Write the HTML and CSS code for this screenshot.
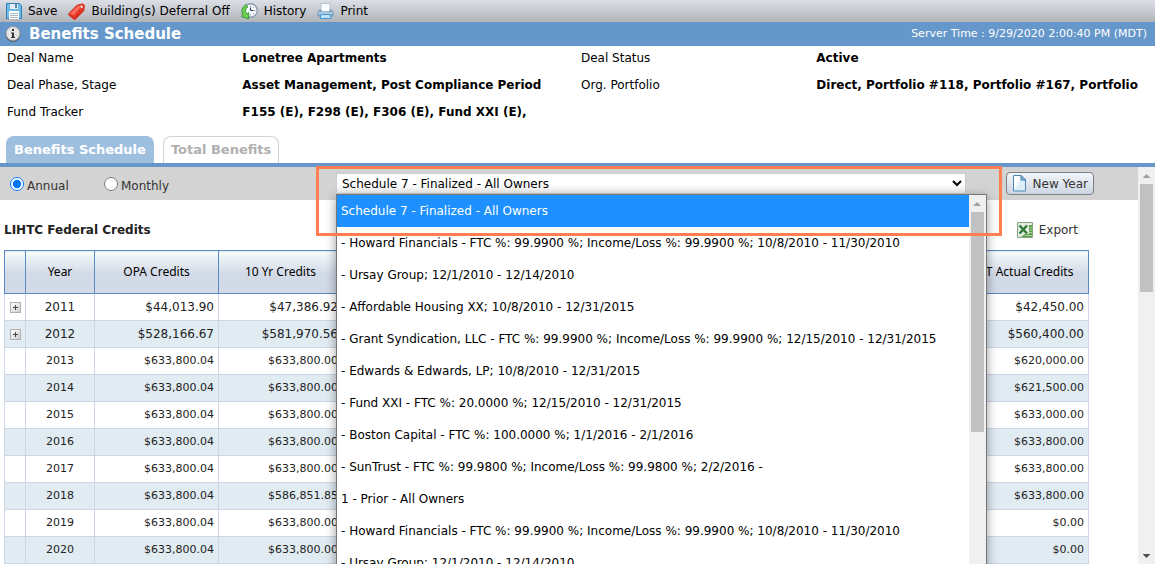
FILE: index.html
```html
<!DOCTYPE html>
<html lang="en">
<head>
<meta charset="utf-8">
<title>Benefits Schedule</title>
<link rel="stylesheet" href="styles.css">
</head>
<body>
<header>
  <nav class="toolbar" aria-label="Actions">
    <button type="button" class="tool">
      <svg width="16" height="16" viewBox="0 0 16 16" aria-hidden="true"><path d="M.5.5h13l2 2v13H.5z" fill="#6dbbe4" stroke="#2f80b3"/><path d="M4 1h8v5H4z" fill="#e6edf2"/><path d="M9 1h2v4H9z" fill="#5d87a8"/><path d="M3 8h10v8H3z" fill="#fff"/><path d="M4 10.500h8M4 12.500h8M4 14.500h8" stroke="#a8bac6"/></svg>
      Save</button>
    <button type="button" class="tool">
      <svg width="17" height="17" viewBox="0 0 17 17" aria-hidden="true"><path d="M.8 10.500 9 2.200 15 .8l1.500 1.500-.7 5.500-8.300 8.400q-1 .6-2-.3L.8 12q-.6-.8 0-1.500z" fill="#e83a26" stroke="#cf2a1a" stroke-width=".8"/><path d="M2 10.500 9.500 3.200l4.500-1-8 9.800z" fill="#fb6f5c"/><path d="m3 12.500 3.500 3 8-8" fill="none" stroke="#c71e10"/><circle cx="13.600" cy="3.800" r="1.400" fill="#fff" stroke="#b53a2e" stroke-width=".5"/></svg>
      Building(s) Deferral Off</button>
    <button type="button" class="tool">
      <svg width="17" height="17" viewBox="0 0 17 17" aria-hidden="true"><circle cx="9.500" cy="7.500" r="6.700" fill="#f8fbfd" stroke="#8d9cac" stroke-width="1.400"/><path d="M9.500 2.500V4M14.500 7.500H13M9.500 12.500V11M6 4l1 1M13 4l-1 1M13 11l-1-1" stroke="#7e8c9b" stroke-width=".8"/><path d="M9.500 4.500v3h3" stroke="#2b3b4c" fill="none"/><path d="M5 1.500Q-1 6 1.800 11.500L.5 13.500l7 2.500.3-6.500L6 11Q3 7.500 6.500 3.500z" fill="#6fd04f" stroke="#2b9430" stroke-width=".9"/></svg>
      History</button>
    <button type="button" class="tool">
      <svg width="17" height="16" viewBox="0 0 17 16" aria-hidden="true"><path d="M4 .5h9V9H4z" fill="#fafdff" stroke="#b3c5d4"/><path d="M2.500 7h1.500v2h9V7h1.500L16 9.500V13H1V9.500z" fill="#96b4cf" stroke="#6c94ba"/><path d="M1.500 10h14" stroke="#cfe3f3"/><path d="M4 11.500h9l1 4H3z" fill="#bfe4fb" stroke="#3f97d3"/></svg>
      Print</button>
  </nav>
  <div class="titlebar">
    <svg width="16" height="16" viewBox="0 0 16 16" aria-hidden="true"><circle cx="8" cy="8.400" r="7.500" fill="#4d5f70"/><circle cx="8" cy="7.500" r="7" fill="#e4e4e4" stroke="#9a9a9a" stroke-width=".8"/><path d="M7 3h2v2H7zM6 6.500h3V11h1v1H6v-1h1V7.500H6z" fill="#333"/></svg>
    <h1>Benefits Schedule</h1>
    <span class="server-time">Server Time : 9/29/2020 2:00:40 PM (MDT)</span>
  </div>
</header>
<dl class="details">
  <dt>Deal Name</dt><dd>Lonetree Apartments</dd>
  <dt>Deal Status</dt><dd>Active</dd>
  <dt>Deal Phase, Stage</dt><dd>Asset Management, Post Compliance Period</dd>
  <dt>Org. Portfolio</dt><dd>Direct, Portfolio #118, Portfolio #167, Portfolio</dd>
  <dt>Fund Tracker</dt><dd>F155 (E), F298 (E), F306 (E), Fund XXI (E),</dd>
</dl>
<div class="tabs" role="tablist">
  <button type="button" class="tab tab-active" role="tab" aria-selected="true">Benefits Schedule</button>
  <button type="button" class="tab" role="tab" aria-selected="false">Total Benefits</button>
</div>
<main class="workspace">
  <div class="content">
    <form class="filters">
      <label class="period"><input type="radio" name="period" checked>Annual</label>
      <label class="period"><input type="radio" name="period">Monthly</label>
      <div class="picker">
        <select class="schedule" aria-label="Schedule"><option>Schedule 7 - Finalized - All Owners</option></select>
        <div class="menu">
          <ul class="options" role="listbox" aria-label="Schedules">
            <li role="option" aria-selected="true" class="selected">Schedule 7 - Finalized - All Owners</li>
            <li role="option">- Howard Financials - FTC %: 99.9900 %; Income/Loss %: 99.9900 %; 10/8/2010 - 11/30/2010</li>
            <li role="option">- Ursay Group; 12/1/2010 - 12/14/2010</li>
            <li role="option">- Affordable Housing XX; 10/8/2010 - 12/31/2015</li>
            <li role="option">- Grant Syndication, LLC - FTC %: 99.9900 %; Income/Loss %: 99.9900 %; 12/15/2010 - 12/31/2015</li>
            <li role="option">- Edwards &amp; Edwards, LP; 10/8/2010 - 12/31/2015</li>
            <li role="option">- Fund XXI - FTC %: 20.0000 %; 12/15/2010 - 12/31/2015</li>
            <li role="option">- Boston Capital - FTC %: 100.0000 %; 1/1/2016 - 2/1/2016</li>
            <li role="option">- SunTrust - FTC %: 99.9800 %; Income/Loss %: 99.9800 %; 2/2/2016 -</li>
            <li role="option">1 - Prior - All Owners</li>
            <li role="option">- Howard Financials - FTC %: 99.9900 %; Income/Loss %: 99.9900 %; 10/8/2010 - 11/30/2010</li>
            <li role="option">- Ursay Group; 12/1/2010 - 12/14/2010</li>
          </ul>
          <div class="scrollbar" aria-hidden="true"><span class="arrow-up"></span><span class="thumb thumb-menu"></span></div>
        </div>
        <div class="callout"></div>
      </div>
      <button type="button" class="new-year">
        <svg width="15" height="17" viewBox="0 0 15 17" aria-hidden="true"><path d="M1.500.5H9L13.500 5v11h-12z" fill="#dceef8" stroke="#4e87b0"/><path d="M2 1h6v4l-6 10z" fill="#fff"/><path d="M9 .5V5h4.500z" fill="#8ec0df" stroke="#3f7fae"/></svg>
        New Year</button>
    </form>
    <div class="section-head">
      <h2>LIHTC Federal Credits</h2>
      <button type="button" class="export">
        <svg width="16" height="16" viewBox="0 0 16 16" aria-hidden="true"><path d="M.5.5h15v15H.5z" fill="#e3ecdf" stroke="#88a583"/><path d="M12 3h3v12H4l4-3h4z" fill="#5fa04f"/><path d="M12.500 5.500H15M12.500 8H15M12 10.500h3M8 13.500h7" stroke="#a9cf9c"/><path d="m2.500 3.500 7.500 8M10 3.500l-7.500 8" stroke="#2c7a37" stroke-width="2.400"/></svg>
        Export</button>
    </div>
    <table class="credits">
      <colgroup><col class="col-toggle"><col class="col-year"><col class="col-money"><col class="col-money"><col><col class="col-money"></colgroup>
      <thead><tr><th></th><th>Year</th><th>OPA Credits</th><th>10 Yr Credits</th><th></th><th>FT Actual Credits</th></tr></thead>
      <tbody>
        <tr class="expandable"><td><button type="button" class="expand" aria-label="Expand 2011"></button></td><td>2011</td><td>$44,013.90</td><td>$47,386.92</td><td></td><td>$42,450.00</td></tr>
        <tr class="expandable"><td><button type="button" class="expand" aria-label="Expand 2012"></button></td><td>2012</td><td>$528,166.67</td><td>$581,970.56</td><td></td><td>$560,400.00</td></tr>
        <tr><td></td><td>2013</td><td>$633,800.04</td><td>$633,800.00</td><td></td><td>$620,000.00</td></tr>
        <tr><td></td><td>2014</td><td>$633,800.04</td><td>$633,800.00</td><td></td><td>$621,500.00</td></tr>
        <tr><td></td><td>2015</td><td>$633,800.04</td><td>$633,800.00</td><td></td><td>$633,000.00</td></tr>
        <tr><td></td><td>2016</td><td>$633,800.04</td><td>$633,800.00</td><td></td><td>$633,800.00</td></tr>
        <tr><td></td><td>2017</td><td>$633,800.04</td><td>$633,800.00</td><td></td><td>$633,800.00</td></tr>
        <tr><td></td><td>2018</td><td>$633,800.04</td><td>$586,851.85</td><td></td><td>$633,800.00</td></tr>
        <tr><td></td><td>2019</td><td>$633,800.04</td><td>$633,800.00</td><td></td><td>$0.00</td></tr>
        <tr><td></td><td>2020</td><td>$633,800.04</td><td>$633,800.00</td><td></td><td>$0.00</td></tr>
      </tbody>
    </table>
  </div>
  <div class="scrollbar" aria-hidden="true"><span class="arrow-up"></span><span class="thumb thumb-page"></span><span class="arrow-down"></span></div>
</main>
</body>
</html>
```
FILE: styles.css
```css
* { box-sizing: border-box; }
body {
  margin: 0;
  height: 100vh;
  overflow: hidden;
  display: flex;
  flex-direction: column;
  background: #fff;
  color: #000;
  font: 12px/16px "DejaVu Sans", Verdana, sans-serif;
}
button { font: inherit; color: inherit; background: none; border: 0; padding: 0; }
h1, h2, dl, dd, ul { margin: 0; padding: 0; }
svg { flex: none; display: block; }

.toolbar {
  display: flex;
  align-items: center;
  gap: 11px;
  height: 22px;
  padding: 0 6px;
  background: linear-gradient(#dcdfe6, #b0b3b8);
}
.tool { display: flex; align-items: center; gap: 6px; white-space: nowrap; }
.titlebar {
  display: flex;
  align-items: center;
  gap: 8px;
  height: 24px;
  padding: 0 8px 0 5px;
  background: #6597ca;
  color: #fff;
}
.titlebar h1 { font-size: 15px; line-height: 24px; }
.server-time { margin-left: auto; font-size: 11px; }

.details {
  display: grid;
  grid-template-columns: 41fr 59fr 41fr 59fr;
  grid-auto-rows: 27px;
  align-items: center;
  padding: 0 0 11px 7px;
  margin-top: -2px;
  white-space: nowrap;
}
.details dd { font-weight: bold; }

.tabs {
  display: flex;
  gap: 9px;
  padding: 0 6px;
  border-bottom: 4px solid #6597ca;
}
.tab {
  height: 27px;
  padding: 0 7px;
  border: 1px solid #d3d3d3;
  border-bottom: 0;
  border-radius: 8px 8px 0 0;
  color: #b0b0b0;
  font-size: 13px;
  font-weight: bold;
}
.tab-active { background: #9fbfdf; border-color: #9fbfdf; color: #fff; }

.workspace { flex: 1; min-height: 0; display: flex; }
.content { flex: 1; min-width: 0; }
.filters {
  display: flex;
  align-items: center;
  height: 33px;
  padding: 0 44px 0 10px;
  background: #d3d3d3;
}
.period { display: flex; align-items: center; gap: 3px; width: 94px; padding-top: 4px; color: #333; }
.period input { margin: 0 0 4px; width: 14px; height: 14px; }
.picker { position: relative; flex: 1; margin: 0 40px 0 138px; }
.schedule {
  display: block;
  width: 100%;
  height: 21px;
  padding: 0 1px;
  border: 1px solid #ccc;
  background: linear-gradient(#fff 50%, #eee);
  color: #000;
  font: inherit;
}
.menu {
  position: absolute;
  z-index: 1;
  top: 100%;
  left: 0;
  right: -21px;
  display: flex;
  border: 1px solid #777;
  background: #fff;
  box-shadow: 0 3px 10px rgba(0, 0, 0, .4);
}
.options { flex: 1; min-width: 0; list-style: none; white-space: nowrap; }
.options li { height: 32px; padding-left: 4px; line-height: 32px; }
.options .selected { background: #1e90ff; color: #fff; }
.callout {
  position: absolute;
  z-index: 2;
  top: -7px;
  left: -20px;
  right: -36px;
  height: 70px;
  border: 3px solid #ff7f50;
  pointer-events: none;
}
.scrollbar {
  display: flex;
  flex-direction: column;
  align-items: center;
  width: 17px;
  background: #f0f0f0;
}
.arrow-up, .arrow-down { width: 8px; height: 4px; margin: 7px 0 6px; }
.arrow-up { background: #a0a0a0; clip-path: polygon(50% 0, 100% 100%, 0 100%); }
.arrow-down { margin-top: auto; background: #505050; clip-path: polygon(0 0, 100% 0, 50% 100%); }
.thumb { width: 13px; background: #c1c1c1; }
.thumb-menu { height: 220px; }
.thumb-page { height: 108px; }

.new-year {
  display: flex;
  align-items: center;
  gap: 6px;
  height: 23px;
  padding: 0 5px;
  border: 1px solid #7b7f86;
  border-radius: 4px;
  background: linear-gradient(#f2f6f9, #cdd5e4);
  color: #333;
  white-space: nowrap;
}
.section-head {
  display: flex;
  align-items: center;
  justify-content: space-between;
  height: 50px;
  padding: 10px 60px 0 4px;
}
.section-head h2 { font-size: 12px; color: #222; }
.export { display: flex; align-items: center; gap: 6px; color: #333; }

.credits {
  width: calc(100% - 53px);
  margin-left: 4px;
  table-layout: fixed;
  border-collapse: collapse;
}
.col-toggle { width: 21px; }
.col-year { width: 69px; }
.col-money { width: 124px; }
.credits th {
  height: 43px;
  padding: 0;
  border: 1px solid #5b8ac6;
  background: linear-gradient(#f5fcfb, #d2d9e7 55%, #d2d9e7);
  font: 12px/16px "Noto Sans", sans-serif;
}
.credits td {
  height: 27px;
  padding: 0 4px;
  border: 1px solid #ccd6e6;
  color: #222;
  font-size: 11px;
  text-align: right;
}
.credits td:first-child { padding: 0; text-align: center; }
.credits td:nth-child(2) { text-align: center; }
.credits .expandable td { font-size: 12px; }
.credits tbody tr:nth-child(even) { background: #e1ebf2; }
.expand {
  display: block;
  width: 11px;
  height: 11px;
  margin: 0 auto;
  border: 1px solid #b0b0b0;
  background:
    linear-gradient(#444, #444) center / 5px 1px no-repeat,
    linear-gradient(#444, #444) center / 1px 5px no-repeat,
    linear-gradient(135deg, #fff, #ccc);
}
```
